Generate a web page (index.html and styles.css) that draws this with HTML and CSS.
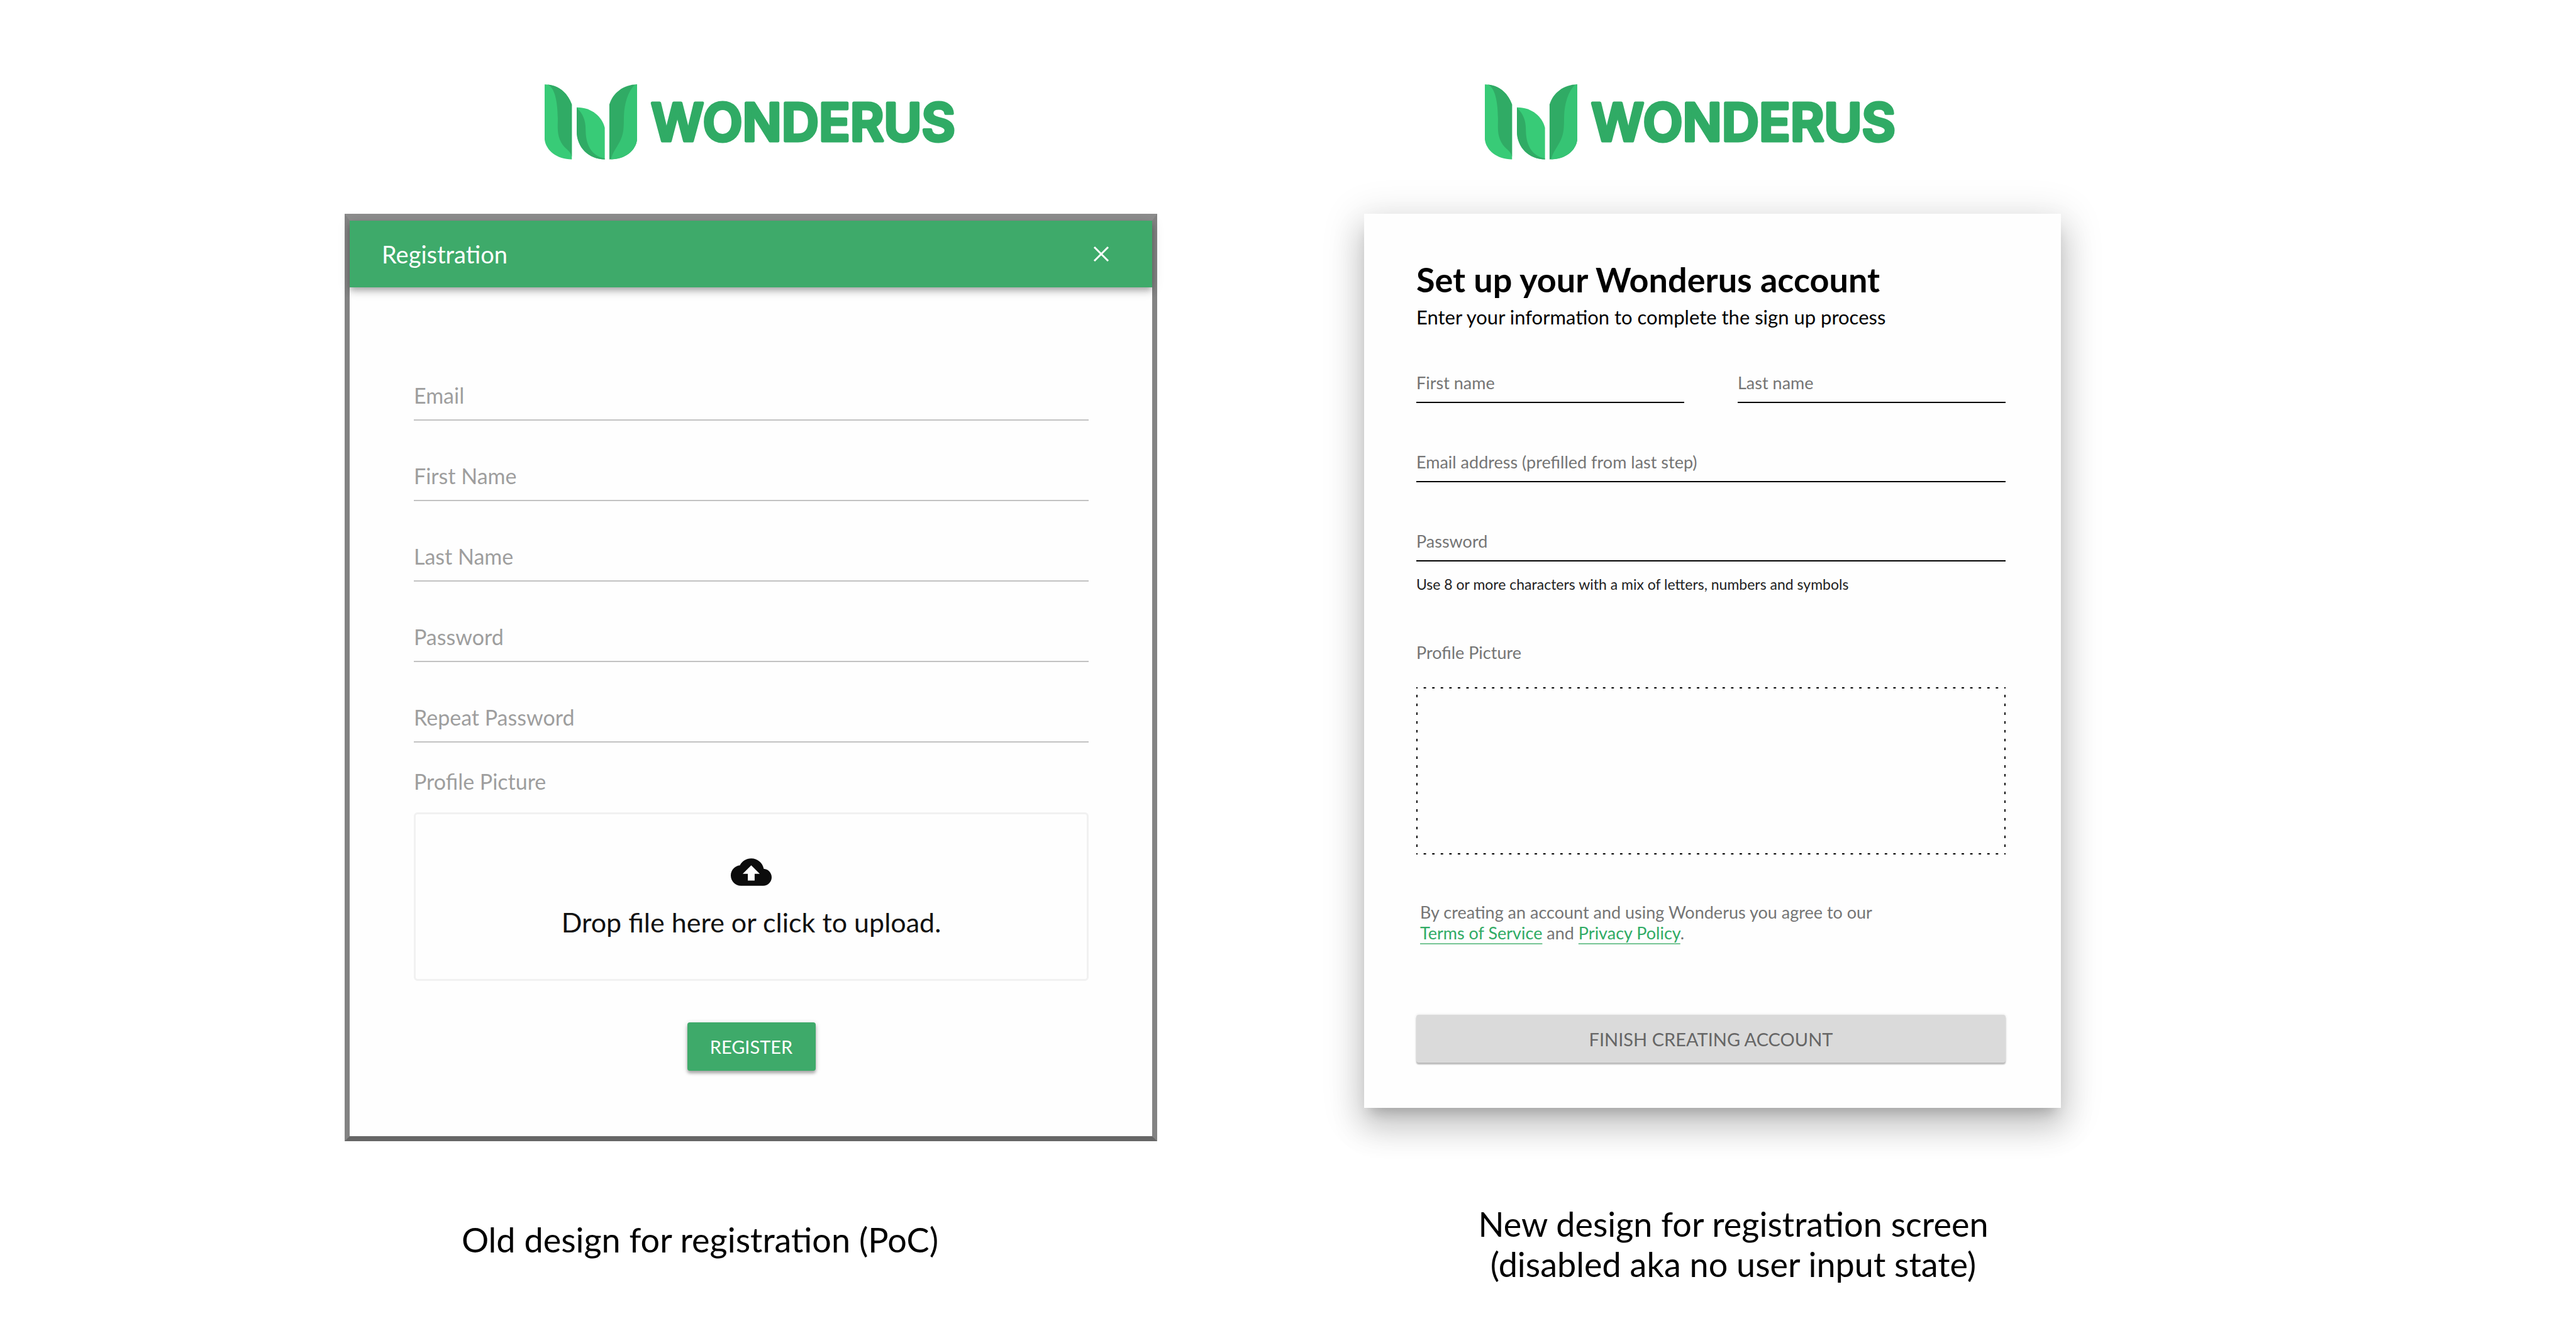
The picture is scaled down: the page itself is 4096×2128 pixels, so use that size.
FILE: index.html
```html
<!DOCTYPE html>
<html lang="en">
<head>
<meta charset="utf-8">
<title>Wonderus registration</title>
<link rel="stylesheet" href="styles.css">
</head>
<body>
<svg width="0" height="0" class="sprite" aria-hidden="true">
  <symbol id="leaf" viewBox="0 0 151 123">
    <path fill="#38cb77" d="M0 0C24 0 39 17 44.400 33V122.600C20 122.600 2 108 0 90Z"/>
    <path fill="#30ab65" d="M5 .3C26 2 39 17 44.400 33V118C42 108 33 106 27 95C20 82 21.500 70 21.500 56C21 28 17 6 5 .3Z"/>
    <path fill="#38cb77" d="M52.400 37.700C77 37.700 94 53 98.200 71V122.600C72 122.600 52.400 103 52.400 77Z"/>
    <path fill="#30ab65" d="M52.400 37.700L54 40C62 48 67 58 67 74C67 98 76 117 98.200 121V122.600C72 122.600 52.400 103 52.400 77Z"/>
    <path fill="#30ab65" d="M151 0C129 0 111 14 105.700 33V122.600C132 122.600 149 108 151 90Z"/>
    <path fill="#36c474" d="M151 0L147 1C136 12 130 32 129.500 52C129 68 130 78 124 91C119 102 110 112 108.500 122.600C132 122.600 149 108 151 90Z"/>
  </symbol>
</svg>
<main class="board">
  <section class="version old">
    <div class="logo"><svg class="logo-mark" aria-hidden="true"><use href="#leaf"/></svg><svg class="logo-name" viewBox="0 0 492 96"><text x="246" y="78" text-anchor="middle">WONDERUS</text></svg></div>
    <form class="dialog">
      <header class="dialog-bar">
        <h1 class="dialog-title">Registration</h1>
        <button type="button" class="close" aria-label="Close"><svg class="close-icon" viewBox="0 0 26 26"><path d="M2 2L24 24M24 2L2 24"/></svg></button>
      </header>
      <div class="dialog-body">
        <div class="dialog-fields">
          <input class="field" type="email" placeholder="Email" aria-label="Email">
          <input class="field" type="text" placeholder="First Name" aria-label="First Name">
          <input class="field" type="text" placeholder="Last Name" aria-label="Last Name">
          <input class="field" type="password" placeholder="Password" aria-label="Password">
          <input class="field" type="password" placeholder="Repeat Password" aria-label="Repeat Password">
        </div>
        <p class="dialog-label">Profile Picture</p>
        <label class="upload">
          <input class="file" type="file">
          <svg class="cloud" viewBox="0 4 24 16" aria-hidden="true"><path d="M19.350 10.040C18.670 6.590 15.640 4 12 4 9.110 4 6.600 5.640 5.350 8.040 2.340 8.360 0 10.910 0 14c0 3.310 2.690 6 6 6h13c2.760 0 5-2.240 5-5 0-2.640-2.050-4.780-4.650-4.960zM14 13v4h-4v-4H7l5-5 5 5h-3z"/></svg>
          <span>Drop file here or click to upload.</span>
        </label>
        <button type="button" class="register">REGISTER</button>
      </div>
    </form>
    <p class="caption">Old design for registration (PoC)</p>
  </section>
  <section class="version new">
    <div class="logo"><svg class="logo-mark" aria-hidden="true"><use href="#leaf"/></svg><svg class="logo-name" viewBox="0 0 492 96"><text x="246" y="78" text-anchor="middle">WONDERUS</text></svg></div>
    <form class="card">
      <h1 class="card-title">Set up your Wonderus account</h1>
      <p class="card-intro">Enter your information to complete the sign up process</p>
      <div class="card-fields">
        <input class="field" type="text" placeholder="First name" aria-label="First name">
        <input class="field" type="text" placeholder="Last name" aria-label="Last name">
        <input class="field wide" type="email" placeholder="Email address (prefilled from last step)" aria-label="Email address">
        <input class="field wide" type="password" placeholder="Password" aria-label="Password" aria-describedby="hint">
      </div>
      <p class="hint" id="hint">Use 8 or more characters with a mix of letters, numbers and symbols</p>
      <label class="card-label" for="picture">Profile Picture</label>
      <label class="dropzone"><input class="file" id="picture" type="file"></label>
      <p class="terms">By creating an account and using Wonderus you agree to our<br><a href="#terms">Terms of Service</a> and <a href="#privacy">Privacy Policy</a>.</p>
      <button type="button" class="finish" disabled>FINISH CREATING ACCOUNT</button>
    </form>
    <p class="caption">New design for registration screen<br>(disabled aka no user input state)</p>
  </section>
</main>
</body>
</html>
```
FILE: styles.css
```css
* {
  box-sizing: border-box;
}

body {
  margin: 0;
  background: #fff;
  color: #000;
  font-family: Lato, "Liberation Sans", sans-serif;
}

h1,
p {
  margin: 0;
}

input,
button {
  font-family: inherit;
  margin: 0;
}

.sprite,
.file {
  position: absolute;
  width: 0;
  height: 0;
  opacity: 0;
}

.board {
  display: grid;
  grid-template-columns: 548fr 1292fr 329fr 1108fr 819fr;
  align-items: start;
  padding-top: 134px;
}

.version {
  display: flex;
  flex-direction: column;
}

.old {
  grid-column: 2;
}

.new {
  grid-column: 4;
}

/* Logo */
.logo {
  display: flex;
  align-items: center;
  justify-content: center;
  gap: 18px;
  height: 120px;
  margin-bottom: 86px;
}

.new .logo {
  padding-right: 68px;
}

.logo-mark {
  width: 147px;
  height: 120px;
}

.logo-name {
  width: 492px;
  height: 96px;
  overflow: visible;
  fill: #30ab65;
  stroke: #30ab65;
  stroke-width: 5px;
  stroke-linejoin: round;
  font-family: Inter, Lato, sans-serif;
  font-size: 82px;
  font-weight: 600;
}

.field {
  display: block;
  width: 100%;
  min-width: 0;
  border: 0;
  border-radius: 0;
  background: none;
  outline: none;
}

.field::placeholder {
  color: inherit;
  opacity: 1;
}

/* Old dialog */
.dialog {
  background: #fefefe;
  border: 8px solid #838383;
  border-top: 11px solid #8d8d8d;
  border-bottom-color: #666;
}

.dialog-bar {
  display: flex;
  align-items: center;
  justify-content: space-between;
  height: 106px;
  padding: 0 68px 0 51px;
  background: #3eaa6a;
  color: #fff;
  box-shadow: 0 4px 8px -2px rgba(0, 0, 0, 0.2), 0 8px 10px rgba(0, 0, 0, 0.14), 0 2px 20px rgba(0, 0, 0, 0.12);
}

.dialog-title {
  font-size: 38px;
  font-weight: 400;
  line-height: 46px;
}

.close {
  display: flex;
  padding: 0;
  border: 0;
  background: none;
}

.close-icon {
  width: 26px;
  height: 26px;
  fill: none;
  stroke: #fff;
  stroke-width: 3;
}

.dialog-body {
  display: flex;
  flex-direction: column;
  padding: 151px 101px 104px 102px;
}

.dialog-fields {
  display: grid;
  gap: 67px;
}

.dialog .field {
  height: 61px;
  padding: 0 0 19px;
  border-bottom: 2px solid #c2c2c2;
  color: #9e9e9e;
  font-size: 34px;
  line-height: 40px;
}

.dialog-label {
  margin: 42px 0 29px;
  color: #9e9e9e;
  font-size: 34px;
  line-height: 40px;
}

.upload {
  display: flex;
  flex-direction: column;
  align-items: center;
  gap: 32px;
  padding: 70px 0 64px;
  border: 3px solid #f1f1f1;
  border-radius: 6px;
  color: #111;
  font-size: 43px;
  line-height: 52px;
}

.cloud {
  width: 65px;
  height: 44px;
  fill: #0c0c0c;
}

.register {
  align-self: center;
  width: 204px;
  height: 77px;
  margin-top: 66px;
  padding: 0;
  border: 0;
  border-radius: 4px;
  background: #3eaa6a;
  color: #fff;
  font-size: 29px;
  box-shadow: 0 4px 4px rgba(0, 0, 0, 0.24), 0 2px 8px rgba(0, 0, 0, 0.2);
}

/* New card */
.card {
  display: flex;
  flex-direction: column;
  padding: 73px 88px 72px 83px;
  background: #fefefe;
  box-shadow: 0 16px 20px -10px rgba(0, 0, 0, 0.2), 0 31px 47px 4px rgba(0, 0, 0, 0.14), 0 12px 58px 10px rgba(0, 0, 0, 0.12);
}

.card-title {
  font-size: 54px;
  font-weight: 700;
  line-height: 64px;
}

.card-intro {
  margin-top: 7px;
  font-size: 31px;
  line-height: 40px;
}

.card-fields {
  display: grid;
  grid-template-columns: 1fr 1fr;
  gap: 75px 85px;
  margin-top: 66px;
}

.wide {
  grid-column: 1 / -1;
}

.card .field {
  height: 51px;
  padding: 0 0 13px;
  border-bottom: 2px solid #000;
  color: #757575;
  font-size: 27px;
  line-height: 36px;
}

.hint {
  margin-top: 22px;
  color: #222;
  font-size: 23px;
  line-height: 28px;
}

.card-label {
  margin-top: 77px;
  color: #757575;
  font-size: 27px;
  line-height: 36px;
}

.dropzone {
  height: 266px;
  margin-top: 37px;
  --dots-x: linear-gradient(90deg, #000 2px, transparent 2px calc(100% - 2px), #000 calc(100% - 2px));
  --dots-y: linear-gradient(#000 2px, transparent 2px calc(100% - 2px), #000 calc(100% - 2px));
  background-image: var(--dots-x), var(--dots-x), var(--dots-y), var(--dots-y);
  background-position: left top, left bottom, left top, right top;
  background-repeat: repeat-x, repeat-x, repeat-y, repeat-y;
  background-size: calc(100% / 69) 2px, calc(100% / 69) 2px, 2px calc(100% / 19), 2px calc(100% / 19);
}

.terms {
  margin-top: 75px;
  padding-left: 6px;
  color: #757575;
  font-size: 27px;
  line-height: 33px;
}

.terms a {
  color: #30ab65;
  text-decoration: underline 2px #76c595;
  text-decoration-skip-ink: none;
  text-underline-offset: 6px;
}

.finish {
  width: 100%;
  height: 76px;
  margin-top: 114px;
  padding: 0;
  border: 0;
  border-radius: 4px;
  background: #dadada;
  color: #666;
  font-size: 29px;
  box-shadow: 0 3px 2px rgba(0, 0, 0, 0.24), 0 0 4px rgba(0, 0, 0, 0.12);
}

.caption {
  font-size: 54px;
  line-height: 64px;
  text-align: center;
}

.old .caption {
  margin-top: 125px;
  padding-right: 162px;
}

.new .caption {
  margin-top: 153px;
  padding-left: 66px;
}
```
